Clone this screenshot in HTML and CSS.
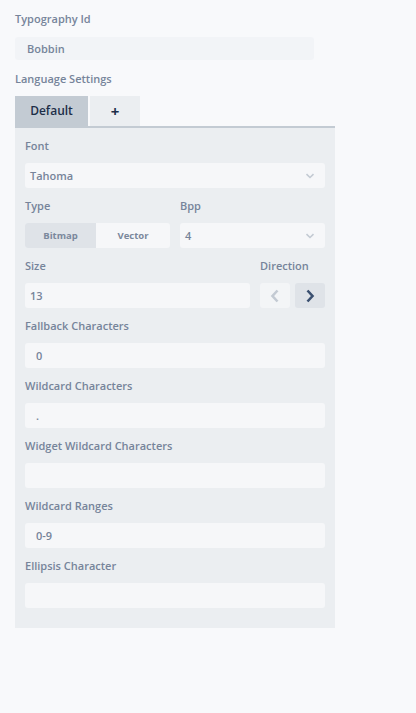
FILE: index.html
```html
<!DOCTYPE html>
<html>
<head>
<meta charset="utf-8">
<link rel="stylesheet" href="styles.css">
</head>
<body>
<div class="page">
  <div class="top-label">Typography Id</div>
  <div class="id-input">Bobbin</div>
  <div class="top-label lang">Language Settings</div>
  <div class="tabs">
    <div class="tab active">Default</div>
    <div class="tab add">+</div>
  </div>
  <div class="panel">
    <div class="field">
      <div class="label">Font</div>
      <div class="input select"><span>Tahoma</span>
        <svg class="chev" width="10" height="6" viewBox="0 0 10 6"><path d="M1.5 1.2 L5 4.5 L8.5 1.2" fill="none" stroke="#c3cad3" stroke-width="1.6"/></svg>
      </div>
    </div>
    <div class="row">
      <div class="field type">
        <div class="label">Type</div>
        <div class="seg">
          <div class="seg-btn on">Bitmap</div>
          <div class="seg-btn">Vector</div>
        </div>
      </div>
      <div class="field bpp">
        <div class="label">Bpp</div>
        <div class="input select"><span>4</span>
          <svg class="chev" width="10" height="6" viewBox="0 0 10 6"><path d="M1.5 1.2 L5 4.5 L8.5 1.2" fill="none" stroke="#c3cad3" stroke-width="1.6"/></svg>
        </div>
      </div>
    </div>
    <div class="row">
      <div class="field size">
        <div class="label">Size</div>
        <div class="input">13</div>
      </div>
      <div class="field dir">
        <div class="label">Direction</div>
        <div class="dir-btns">
          <div class="dir-btn"><svg width="10" height="14" viewBox="0 0 10 14"><path d="M7.5 1.5 L2.5 7 L7.5 12.5" fill="none" stroke="#c3cad3" stroke-width="2.6"/></svg></div>
          <div class="dir-btn on"><svg width="10" height="14" viewBox="0 0 10 14"><path d="M2.5 1.5 L7.5 7 L2.5 12.5" fill="none" stroke="#3b5070" stroke-width="2.6"/></svg></div>
        </div>
      </div>
    </div>
    <div class="field">
      <div class="label">Fallback Characters</div>
      <div class="input pad">0</div>
    </div>
    <div class="field">
      <div class="label">Wildcard Characters</div>
      <div class="input pad">.</div>
    </div>
    <div class="field">
      <div class="label">Widget Wildcard Characters</div>
      <div class="input pad"></div>
    </div>
    <div class="field">
      <div class="label">Wildcard Ranges</div>
      <div class="input pad">0-9</div>
    </div>
    <div class="field">
      <div class="label">Ellipsis Character</div>
      <div class="input pad"></div>
    </div>
  </div>
</div>
</body>
</html>
```
FILE: styles.css
```css
* { box-sizing: border-box; }
html, body { margin: 0; padding: 0; background: #f8f9fb; }
body {
  font-family: "Open Sans", "Noto Sans", sans-serif;
  color: #6b7a90;
  width: 416px;
  height: 713px;
}
.page { padding: 11px 15px 0 15px; }
.top-label {
  font-size: 11px;
  line-height: 16px;
  height: 16px;
  font-weight: 600;
  color: #76849a;
}
.id-input {
  margin-top: 10px;
  width: 299px;
  height: 23px;
  background: #f2f4f7;
  border-radius: 3px;
  font-size: 11px;
  font-weight: 600;
  line-height: 23px;
  padding-left: 12px;
  color: #76849a;
}
.lang { margin-top: 11px; }
.tabs {
  margin-top: 9px;
  display: flex;
  gap: 2px;
  width: 320px;
  border-bottom: 2px solid #c3cbd3;
}
.tab {
  height: 30px;
  line-height: 30px;
  text-align: center;
  font-size: 12px;
  font-weight: 600;
  color: #1d2e48;
}
.tab.active { width: 73px; background: #c3cbd3; }
.tab.add { width: 50px; background: #ebeef1; font-weight: 700; font-size: 15px; }
.panel {
  width: 320px;
  background: #ebeef1;
  padding: 10px 10px 10px 10px;
}
.field { margin-bottom: 10px; }
.label {
  font-size: 11px;
  line-height: 16px;
  height: 16px;
  margin-bottom: 9px;
  font-weight: 600;
  color: #76849a;
}
.input {
  height: 25px;
  background: #f6f7f9;
  border-radius: 3px;
  font-size: 11px;
  font-weight: 600;
  line-height: 25px;
  padding-left: 5px;
  color: #76849a;
  position: relative;
}
.input.pad { padding-left: 11px; }
.select { display: flex; align-items: center; justify-content: space-between; padding-right: 10px; }
.chev { display: block; }
.row { display: flex; gap: 10px; }
.type { width: 145px; }
.bpp { flex: 1; }
.seg {
  display: flex;
  height: 25px;
  border-radius: 3px;
  overflow: hidden;
  background: #f6f7f9;
}
.seg-btn {
  flex: 1;
  text-align: center;
  font-size: 9.5px;
  font-weight: 700;
  line-height: 25px;
  color: #7a889c;
}
.seg-btn.on { background: #dfe3e8; flex: 0 0 71px; }
.size { flex: 1; }
.dir { width: 65px; }
.dir-btns { display: flex; gap: 5px; }
.dir-btn {
  width: 30px;
  height: 25px;
  background: #f3f5f7;
  border-radius: 3px;
  display: flex;
  align-items: center;
  justify-content: center;
}
.dir-btn.on { background: #dfe3e8; }
```
